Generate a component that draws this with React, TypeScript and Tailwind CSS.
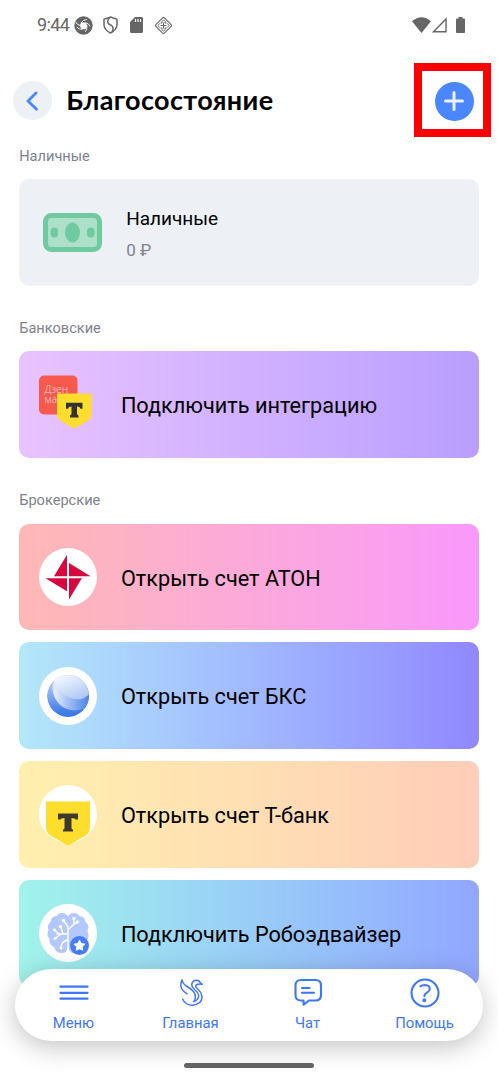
import type { ReactNode } from 'react';

type Offer = {
  title: string;
  gradient: string;
  logo: ReactNode;
};

function StatusBar() {
  return (
    <div className="flex h-[50px] shrink-0 items-center pr-[33px] pl-[37px] text-[#666]">
      <span className="w-[37px] text-[18px] leading-none tracking-[-0.6px]">9:44</span>
      <svg width="19" height="19" viewBox="0 0 19 19">
        <circle cx="9.5" cy="9.5" r="9.2" fill="currentColor" />
        <path d="M7.200 6.200 12 6.800 13.300 10 11.500 13.200 7.500 13.300 5.800 9.500Z" fill="#fff" />
        <g stroke="#fff" strokeWidth="0.9" fill="none" strokeLinecap="round">
          <path d="M7.500 6.300Q9 4 12.500 3.500" />
          <path d="M12 6.800Q15 7.500 16 10" />
          <path d="M13 10Q13.500 13.500 11.500 15.500" />
          <path d="M8 13.300Q5 13.500 3.200 11.500" />
          <path d="M6 9.500Q2.500 8.500 1.500 6" />
        </g>
      </svg>
      <svg className="ml-[10px]" width="15" height="18" viewBox="0 0 15 18" fill="none" stroke="currentColor" strokeWidth="1.5">
        <path d="M7.500 1 14 3.200V9Q13.500 14 7.500 17Q1.500 14 1 9V3.200Z" />
        <path d="M7 1.500Q3.800 4.500 5 7Q6 8.500 8.500 9.500Q11.500 11.500 9 16" />
      </svg>
      <svg className="ml-[12px]" width="14" height="16" viewBox="0 0 14 16">
        <path d="M5 0H11.500Q13 0 13 1.500V14.500Q13 16 11.500 16H1.500Q0 16 0 14.500V5Z" fill="currentColor" />
        <path d="M5.500 2V5M8 2V5M10.500 2V5" stroke="#fff" strokeWidth="1.2" />
      </svg>
      <svg className="ml-[10px]" width="19" height="19" viewBox="0 0 19 19" fill="none" stroke="currentColor">
        <rect x="3.500" y="3.500" width="12" height="12" rx="1.200" transform="rotate(45 9.500 9.500)" strokeWidth="1.1" />
        <path
          d="M9.500 6.500V12.500M6.500 9.500H12.500M7.500 5.500 9.500 4 11.500 5.500M7.500 13.500 9.500 15 11.500 13.500M5.500 7.500 4 9.500 5.500 11.500M13.500 7.500 15 9.500 13.500 11.500M6.500 7H8V5.800M12.500 7H11V5.800M6.500 12H8V13.200M12.500 12H11V13.200"
          strokeWidth="1"
        />
      </svg>
      <div className="ml-auto flex items-center">
        <svg width="19" height="16" viewBox="0 0 19 16">
          <path d="M0 4.200Q9.500-3.600 19 4.200L9.500 16Z" fill="currentColor" />
        </svg>
        <svg className="ml-px" width="15" height="16" viewBox="0 0 15 16">
          <path d="M14 2V14.800H1.500Z" fill="none" stroke="currentColor" strokeWidth="1.400" />
        </svg>
        <svg className="ml-[9px]" width="9" height="16" viewBox="0 0 9 16">
          <path d="M2.500 0H6.500V1.500H8Q9 1.500 9 2.500V15Q9 16 8 16H1Q0 16 0 15V2.500Q0 1.500 1 1.500H2.500Z" fill="currentColor" />
        </svg>
      </div>
    </div>
  );
}

function Header() {
  return (
    <header className="flex h-[100px] shrink-0 items-center pr-[7px] pl-[13.300px]">
      <button className="mt-[1.500px] flex size-[39px] items-center justify-center rounded-full bg-[#edf1f5]">
        <svg className="-ml-[2px]" width="12" height="20" viewBox="0 0 12 20" fill="none">
          <path d="M10 2 2 10 10.500 18.300" stroke="#4a86ff" strokeWidth="2.800" strokeLinecap="round" strokeLinejoin="round" />
        </svg>
      </button>
      <h1 className="-mt-[2px] ml-[14px] font-['Lato'] text-[27px] leading-none font-bold tracking-[0.350px] whitespace-nowrap text-black">
        Благосостояние
      </h1>
      <div className="ml-auto flex h-[74px] w-[77px] items-center justify-center border-8 border-[#fe0000] pt-[2px] pl-[3px]">
        <button className="flex size-[39px] items-center justify-center rounded-full bg-[#4a86ff]">
          <svg width="20" height="20" viewBox="0 0 20 20">
            <path d="M10 1.500V18.500M1.500 10H18.500" stroke="#edf1f5" strokeWidth="3" strokeLinecap="round" />
          </svg>
        </button>
      </div>
    </header>
  );
}

function SectionTitle({ children }: { children: ReactNode }) {
  return <h2 className="text-[14.600px] leading-[18px] text-[#808290]">{children}</h2>;
}

function CashIcon() {
  return (
    <svg width="59" height="39" viewBox="0 0 59 39">
      <rect x="2.500" y="2.500" width="54" height="34" rx="6" fill="#aedfc9" stroke="#6fcb9f" strokeWidth="5" />
      <ellipse cx="29.500" cy="19.500" rx="7.500" ry="10" fill="#6fcb9f" />
      <rect x="7.500" y="14.500" width="7.500" height="10" rx="3.700" fill="#6fcb9f" />
      <rect x="44" y="14.500" width="7.500" height="10" rx="3.700" fill="#6fcb9f" />
    </svg>
  );
}

function IntegrationLogo() {
  return (
    <svg width="58" height="58" viewBox="0 0 58 58">
      <rect x="0" y="0.500" width="38.500" height="39" rx="5" fill="#f8594f" />
      <text fontFamily="Open Sans" fontWeight="300" fontSize="10.500" fill="#ffdcd9">
        <tspan x="5.500" y="18">Дзен</tspan>
        <tspan x="5.500" y="27.500">ма</tspan>
      </text>
      <path d="M18 18.500H52.500V38.500Q52.500 43.500 48.500 46L35.200 53.500 22 46Q18 43.500 18 38.500Z" fill="#ffdd2d" />
      <path d="M27 27.700H43.500V33.700H41.500Q41 31.500 38 31.500V38.500Q38 40 39.500 40.500V42.500H31V40.500Q32.500 40 32.500 38.500V31.500Q29.500 31.500 29 33.700H27Z" fill="#333" />
    </svg>
  );
}

function AtonLogo() {
  return (
    <svg width="58" height="58" viewBox="0 0 58 58">
      <circle cx="29" cy="29" r="29" fill="#fff" />
      <g fill="#d8073f">
        <path d="M28 6.800V28.300H15Z" />
        <path d="M30 15V28.300H51.500Z" />
        <path d="M6.500 30.200H28V43.200Z" />
        <path d="M30 30.200H42.800L30 51.500Z" />
      </g>
    </svg>
  );
}

function BcsLogo() {
  return (
    <svg width="58" height="58" viewBox="0 0 58 58">
      <defs>
        <linearGradient id="bcs-base" x1="0.200" y1="0" x2="0.400" y2="1">
          <stop offset="0" stopColor="#c9daf8" />
          <stop offset="0.800" stopColor="#4a82e8" />
          <stop offset="1" stopColor="#3c78e4" />
        </linearGradient>
        <linearGradient id="bcs-mid" x1="0.100" y1="0.500" x2="0.800" y2="0.600">
          <stop offset="0" stopColor="#dde8fb" />
          <stop offset="1" stopColor="#5288ea" />
        </linearGradient>
        <linearGradient id="bcs-top" x1="0" y1="0" x2="1" y2="0.400">
          <stop offset="0.400" stopColor="#eef4fe" />
          <stop offset="1" stopColor="#b4cbf6" />
        </linearGradient>
        <clipPath id="bcs-clip">
          <circle cx="29" cy="29" r="21" />
        </clipPath>
      </defs>
      <circle cx="29" cy="29" r="29" fill="#fff" />
      <g clipPath="url(#bcs-clip)">
        <circle cx="29" cy="29" r="21" fill="url(#bcs-base)" />
        <circle cx="36" cy="21" r="22.500" fill="url(#bcs-mid)" />
        <ellipse cx="34" cy="15" rx="20" ry="15.500" transform="rotate(38 34 15)" fill="url(#bcs-top)" />
      </g>
    </svg>
  );
}

function TbankLogo() {
  return (
    <svg width="58" height="61" viewBox="0 0 58 61">
      <circle cx="29" cy="29" r="29" fill="#fff" />
      <path d="M7 16.500H51V42Q51 48 46 51L29 60.500 12 51Q7 48 7 42Z" fill="#ffdd2d" />
      <path d="M19 28.500H39V34.500H36.500Q36 33 32.500 33V43Q32.500 44.500 34 44.500V46.500H24V44.500Q25.500 44.500 25.500 43V33Q22 33 21.500 34.500H19Z" fill="#3c3a2c" />
    </svg>
  );
}

function RoboLogo() {
  return (
    <svg width="58" height="58" viewBox="0 0 58 58">
      <circle cx="29" cy="29" r="29" fill="#fff" />
      <path
        d="M28.500 12Q27 9 23 9Q19 9 18 12Q12 12 11.500 18Q7.500 21 9.500 26Q7 31 10.500 35Q10 41 15 43Q17 49 23 49Q28 49 28.500 44L30 45Q30.500 49 35 49Q46 47 47.500 37Q51 33 48.500 27Q51 21 46.500 18Q46 12.500 40 12Q39 9 34.500 9Q31 9 29.500 12Z"
        fill="#b3c8ff"
      />
      <g stroke="#fff" strokeWidth="1.400" fill="none" strokeLinecap="round">
        <path d="M29 23V48M29 26 35 20V14.500M29 23 25 17M32 23 38 18M28.500 30H18M22 30 16 34.500M20 30 15.500 26M24 30 21.500 22.500M28 36Q22 38 22 44" />
      </g>
      <g fill="#fff">
        <circle cx="24.500" cy="16.500" r="1.700" />
        <circle cx="35" cy="14.500" r="1.700" />
        <circle cx="38.500" cy="18" r="1.700" />
        <circle cx="21.500" cy="22.500" r="1.700" />
        <circle cx="15.500" cy="26" r="1.600" />
        <circle cx="16" cy="34.500" r="1.600" />
        <circle cx="22" cy="44" r="1.600" />
      </g>
      <circle cx="40.500" cy="41.500" r="9.500" fill="#477cf8" />
      <path d="M40.500 36.500 42.100 39.700 45.500 40.200 43 42.600 43.600 46 40.500 44.500 37.400 46 38 42.600 35.500 40.200 38.900 39.700Z" fill="#fff" stroke="#fff" strokeWidth="1.200" strokeLinejoin="round" />
    </svg>
  );
}

function OfferCard({ title, gradient, logo }: Offer) {
  return (
    <div className={`flex h-[106.500px] shrink-0 items-center rounded-[10px] pl-[19.700px] ${gradient}`}>
      <div className="h-[58px] w-[58px] shrink-0">{logo}</div>
      <span className="ml-[24px] pt-[3.500px] text-[21.700px] leading-[28px] whitespace-nowrap text-black">{title}</span>
    </div>
  );
}

const brokers: Offer[] = [
  { title: 'Открыть счет АТОН', gradient: 'bg-linear-to-r from-[#ffb8b4] to-[#f998fb]', logo: <AtonLogo /> },
  { title: 'Открыть счет БКС', gradient: 'bg-linear-to-r from-[#b3e8f8] to-[#9187ff]', logo: <BcsLogo /> },
  { title: 'Открыть счет Т-банк', gradient: 'bg-linear-to-r from-[#fff0ae] to-[#ffcdb9]', logo: <TbankLogo /> },
  { title: 'Подключить Робоэдвайзер', gradient: 'bg-linear-to-r from-[#a1f3ea] to-[#92a6ff]', logo: <RoboLogo /> },
];

function MenuIcon() {
  return (
    <svg width="30" height="30" viewBox="0 0 30 30" stroke="currentColor" strokeWidth="2.200" strokeLinecap="round">
      <path d="M1.500 8.700H28.500M1.500 14.800H28.500M1.500 20.700H28.500" />
    </svg>
  );
}

function SwanIcon() {
  return (
    <svg width="30" height="30" viewBox="0 0 30 30" fill="none" stroke="currentColor" strokeWidth="1.500" strokeLinecap="round" strokeLinejoin="round">
      <path d="M11 15.800Q3.500 11 5 5.500Q5.300 3.500 6 1.800Q6.500 5 9.500 7.500Q15 10.500 17.500 13.500Q20 17 19.300 20Q19 22.500 17.500 23.800Q22.700 22 22.700 17.500Q22.300 14.500 18.500 11.500Q15.500 9 15.700 6.300Q16.500 2.500 20.500 2.300Q23.500 2.500 24.300 4.800L26 6.200" />
      <path d="M26 6.200Q23 5.800 21 6.500Q19 7.500 20.200 9.500Q25.800 14 26 19.500Q25.500 26.500 16.500 27.200Q9.500 27.200 6.700 21.200" />
    </svg>
  );
}

function ChatIcon() {
  return (
    <svg width="30" height="30" viewBox="0 0 30 30" fill="none" stroke="currentColor" strokeWidth="2.100" strokeLinecap="round" strokeLinejoin="round">
      <path d="M8 2H22.500Q28 2 28 7.500V17Q28 22.500 22.500 22.500H16L10.500 26.700V22.500H8Q2.500 22.500 2.500 17V7.500Q2.500 2 8 2Z" />
      <path d="M9 10H16.500M9 14.800H21" />
    </svg>
  );
}

function HelpIcon() {
  return (
    <svg width="30" height="30" viewBox="0 0 30 30" fill="none" stroke="currentColor" strokeWidth="2.100" strokeLinecap="round">
      <circle cx="15" cy="15" r="13.500" />
      <path d="M10.500 8.300Q12 7 15 7Q19.800 7.200 19.800 11Q19.600 13 17 14.600Q14.300 16 14.300 18" />
      <circle cx="14.300" cy="22.300" r="0.900" fill="currentColor" />
    </svg>
  );
}

const tabs = [
  { label: 'Меню', icon: <MenuIcon /> },
  { label: 'Главная', icon: <SwanIcon /> },
  { label: 'Чат', icon: <ChatIcon /> },
  { label: 'Помощь', icon: <HelpIcon /> },
];

function BottomNav() {
  return (
    <div className="absolute inset-x-0 bottom-0 flex flex-col items-center px-[15px] pb-[12px]">
      <nav className="grid h-[72.500px] w-full grid-cols-4 rounded-full bg-white pt-[9px] text-[#3f76f8] shadow-[0_6px_26px_rgba(0,0,0,0.24)]">
        {tabs.map((tab) => (
          <a key={tab.label} className="flex flex-col items-center">
            {tab.icon}
            <span className="mt-[6px] text-[14.800px] leading-[18px]">{tab.label}</span>
          </a>
        ))}
      </nav>
      <div className="mt-[22px] h-[5px] w-[130px] rounded-full bg-[#646464]" />
    </div>
  );
}

export default function App() {
  return (
    <div className="relative flex h-[1080px] w-[498px] flex-col overflow-hidden bg-white font-['Roboto',sans-serif]">
      <StatusBar />
      <Header />
      <main className="-mt-[3.500px] flex flex-col pr-[19.500px] pl-[19.200px]">
        <SectionTitle>Наличные</SectionTitle>
        <div className="mt-[14.500px] mb-[33px] flex h-[106.500px] shrink-0 items-center rounded-[10px] bg-[#edf1f5] pl-[24px]">
          <CashIcon />
          <div className="ml-[24px] pt-[4px]">
            <p className="text-[19px] leading-[28px] text-black">Наличные</p>
            <p className="mt-[3px] text-[17px] leading-[28px] text-[#808290]">0 ₽</p>
          </div>
        </div>
        <SectionTitle>Банковские</SectionTitle>
        <div className="mt-[14.500px] mb-[33px]">
          <OfferCard
            title="Подключить интеграцию"
            gradient="bg-linear-to-r from-[#e9c3ff] to-[#b99eff]"
            logo={<IntegrationLogo />}
          />
        </div>
        <SectionTitle>Брокерские</SectionTitle>
        <div className="mt-[15px] flex flex-col gap-[12.250px]">
          {brokers.map((offer) => (
            <OfferCard key={offer.title} {...offer} />
          ))}
        </div>
      </main>
      <BottomNav />
    </div>
  );
}
